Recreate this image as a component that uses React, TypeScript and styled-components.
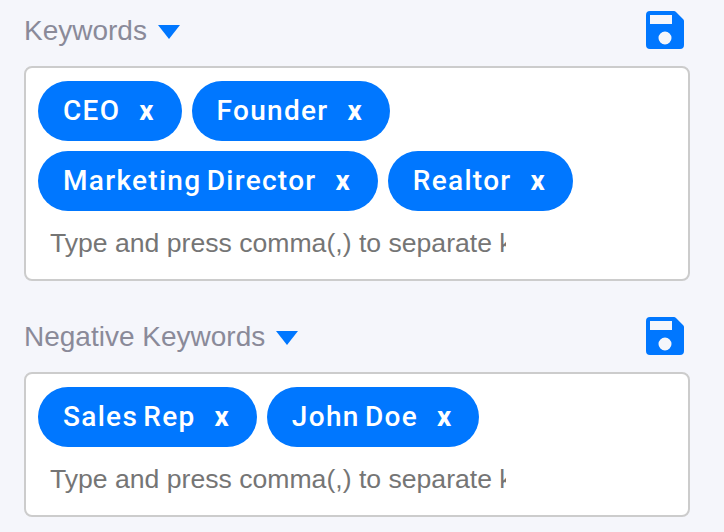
import React from 'react';
import styled, { createGlobalStyle } from 'styled-components';

const GlobalStyle = createGlobalStyle`
  html, body {
    margin: 0;
    padding: 0;
    background: #f5f6fb;
  }
`;

const BLUE = '#0077ff';

const Page = styled.div`
  width: 724px;
  height: 532px;
  box-sizing: border-box;
  padding: 10px 34px 0 24px;
  overflow: hidden;
  display: flex;
  flex-direction: column;
  gap: 35px;
  font-family: 'Liberation Sans', Arial, sans-serif;
`;

const Section = styled.section`
  display: flex;
  flex-direction: column;
`;

const Header = styled.div`
  display: flex;
  align-items: center;
  justify-content: space-between;
  height: 40px;
  padding-right: 6px;
  margin-bottom: 16px;
`;

const Title = styled.div`
  display: flex;
  align-items: center;
  gap: 11px;
  padding-top: 2px;
  color: #8a8a99;
  font-size: 28px;
  line-height: 40px;
`;

const Caret = styled.span`
  width: 0;
  height: 0;
  margin-top: 2px;
  border-left: 11.5px solid transparent;
  border-right: 11.5px solid transparent;
  border-top: 14px solid ${BLUE};
`;

const Box = styled.div`
  box-sizing: border-box;
  background: #fff;
  border: 2px solid #cccccc;
  border-radius: 8px;
  padding: 13px 12px;
  display: flex;
  flex-wrap: wrap;
  gap: 10px;
`;

const Tag = styled.span`
  display: inline-flex;
  align-items: center;
  height: 60px;
  box-sizing: border-box;
  padding: 0 28px 2px 25px;
  gap: 19px;
  border-radius: 30px;
  background: ${BLUE};
  color: #fff;
  font-family: Roboto, 'Liberation Sans', sans-serif;
  font-size: 28px;
  font-weight: 500;
  letter-spacing: 1.3px;
  word-spacing: -3px;
`;

const Remove = styled.span`
  font-weight: 700;
  letter-spacing: 0;
`;

const Input = styled.input`
  box-sizing: border-box;
  width: 468px;
  height: 45px;
  padding: 0 0 0 12px;
  border: none;
  outline: none;
  background: transparent;
  font-family: 'Liberation Sans', Arial, sans-serif;
  font-size: 26.6px;
  &::placeholder {
    color: #757575;
    opacity: 1;
  }
`;

const SaveIcon = () => (
  <svg width="38" height="38" viewBox="0 0 38 38" aria-hidden="true">
    <path
      fill={BLUE}
      fillRule="evenodd"
      d="M4 0H28Q29 0 30 1L37 8Q38 9 38 10V34A4 4 0 0 1 34 38H4A4 4 0 0 1 0 34V4A4 4 0 0 1 4 0ZM4 4V13H26V4ZM19 20.5A6.5 6.5 0 1 0 19 33.5A6.5 6.5 0 1 0 19 20.5Z"
    />
  </svg>
);

const groups = [
  { title: 'Keywords', tags: ['CEO', 'Founder', 'Marketing Director', 'Realtor'] },
  { title: 'Negative Keywords', tags: ['Sales Rep', 'John Doe'] },
];

export default function App() {
  return (
    <Page>
      <GlobalStyle />
      {groups.map((group) => (
        <Section key={group.title}>
          <Header>
            <Title>
              {group.title}
              <Caret />
            </Title>
            <SaveIcon />
          </Header>
          <Box>
            {group.tags.map((tag) => (
              <Tag key={tag}>
                {tag}
                <Remove>x</Remove>
              </Tag>
            ))}
            <Input placeholder="Type and press comma(,) to separate keywords" readOnly />
          </Box>
        </Section>
      ))}
    </Page>
  );
}
